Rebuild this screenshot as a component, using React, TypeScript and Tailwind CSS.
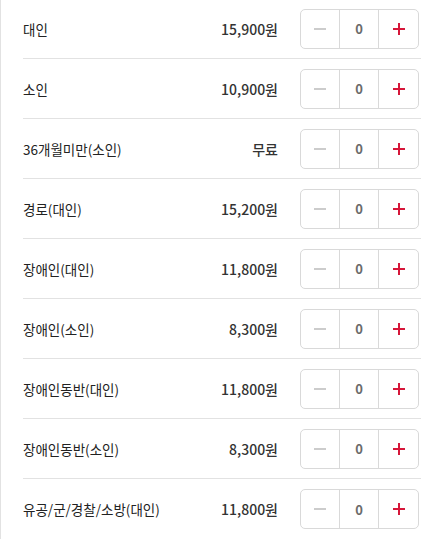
import { useState } from 'react';

const TICKETS = [
  { name: '대인', price: '15,900원' },
  { name: '소인', price: '10,900원' },
  { name: '36개월미만(소인)', price: '무료' },
  { name: '경로(대인)', price: '15,200원' },
  { name: '장애인(대인)', price: '11,800원' },
  { name: '장애인(소인)', price: '8,300원' },
  { name: '장애인동반(대인)', price: '11,800원' },
  { name: '장애인동반(소인)', price: '8,300원' },
  { name: '유공/군/경찰/소방(대인)', price: '11,800원' },
];

function Stepper({ value, onChange }: { value: number; onChange: (v: number) => void }) {
  return (
    <div className="grid grid-cols-3 w-[119px] h-[40px] border border-[#d9d9d9] rounded-[5px] mr-[2px] shrink-0">
      <button
        onClick={() => onChange(Math.max(0, value - 1))}
        className="flex items-center justify-center border-r border-[#d9d9d9]"
      >
        <span className="block w-[12px] h-[2px] bg-[#cccccc]" />
      </button>
      <div className="flex items-center justify-center border-r border-[#d9d9d9] text-[13px] font-bold text-[#6b6b6b] pt-px">
        {value}
      </div>
      <button onClick={() => onChange(value + 1)} className="flex items-center justify-center relative">
        <span className="block w-[12px] h-[2px] bg-[#d6173a]" />
        <span className="absolute w-[2px] h-[12px] bg-[#d6173a]" />
      </button>
    </div>
  );
}

export default function App() {
  const [counts, setCounts] = useState<number[]>(TICKETS.map(() => 0));

  return (
    <div className="w-[443px] h-[539px] overflow-hidden bg-white [font-family:'Noto_Sans_CJK_KR','Noto_Sans',sans-serif]">
      <div className="border-l border-b border-[#e2e2e2] -mt-px">
        <ul className="mx-[22px]">
          {TICKETS.map((t, i) => (
            <li
              key={t.name}
              className={`flex items-center h-[60px] ${i < TICKETS.length - 1 ? 'border-b border-[#e2e2e2]' : 'h-[59px]'}`}
            >
              <span className="flex-1 text-[13.5px] text-[#222] pt-px">{t.name}</span>
              <span className="text-[14px] font-medium text-[#333] mr-[22px] pt-px">{t.price}</span>
              <Stepper
                value={counts[i]}
                onChange={(v) => setCounts((c) => c.map((x, j) => (j === i ? v : x)))}
              />
            </li>
          ))}
        </ul>
      </div>
    </div>
  );
}
